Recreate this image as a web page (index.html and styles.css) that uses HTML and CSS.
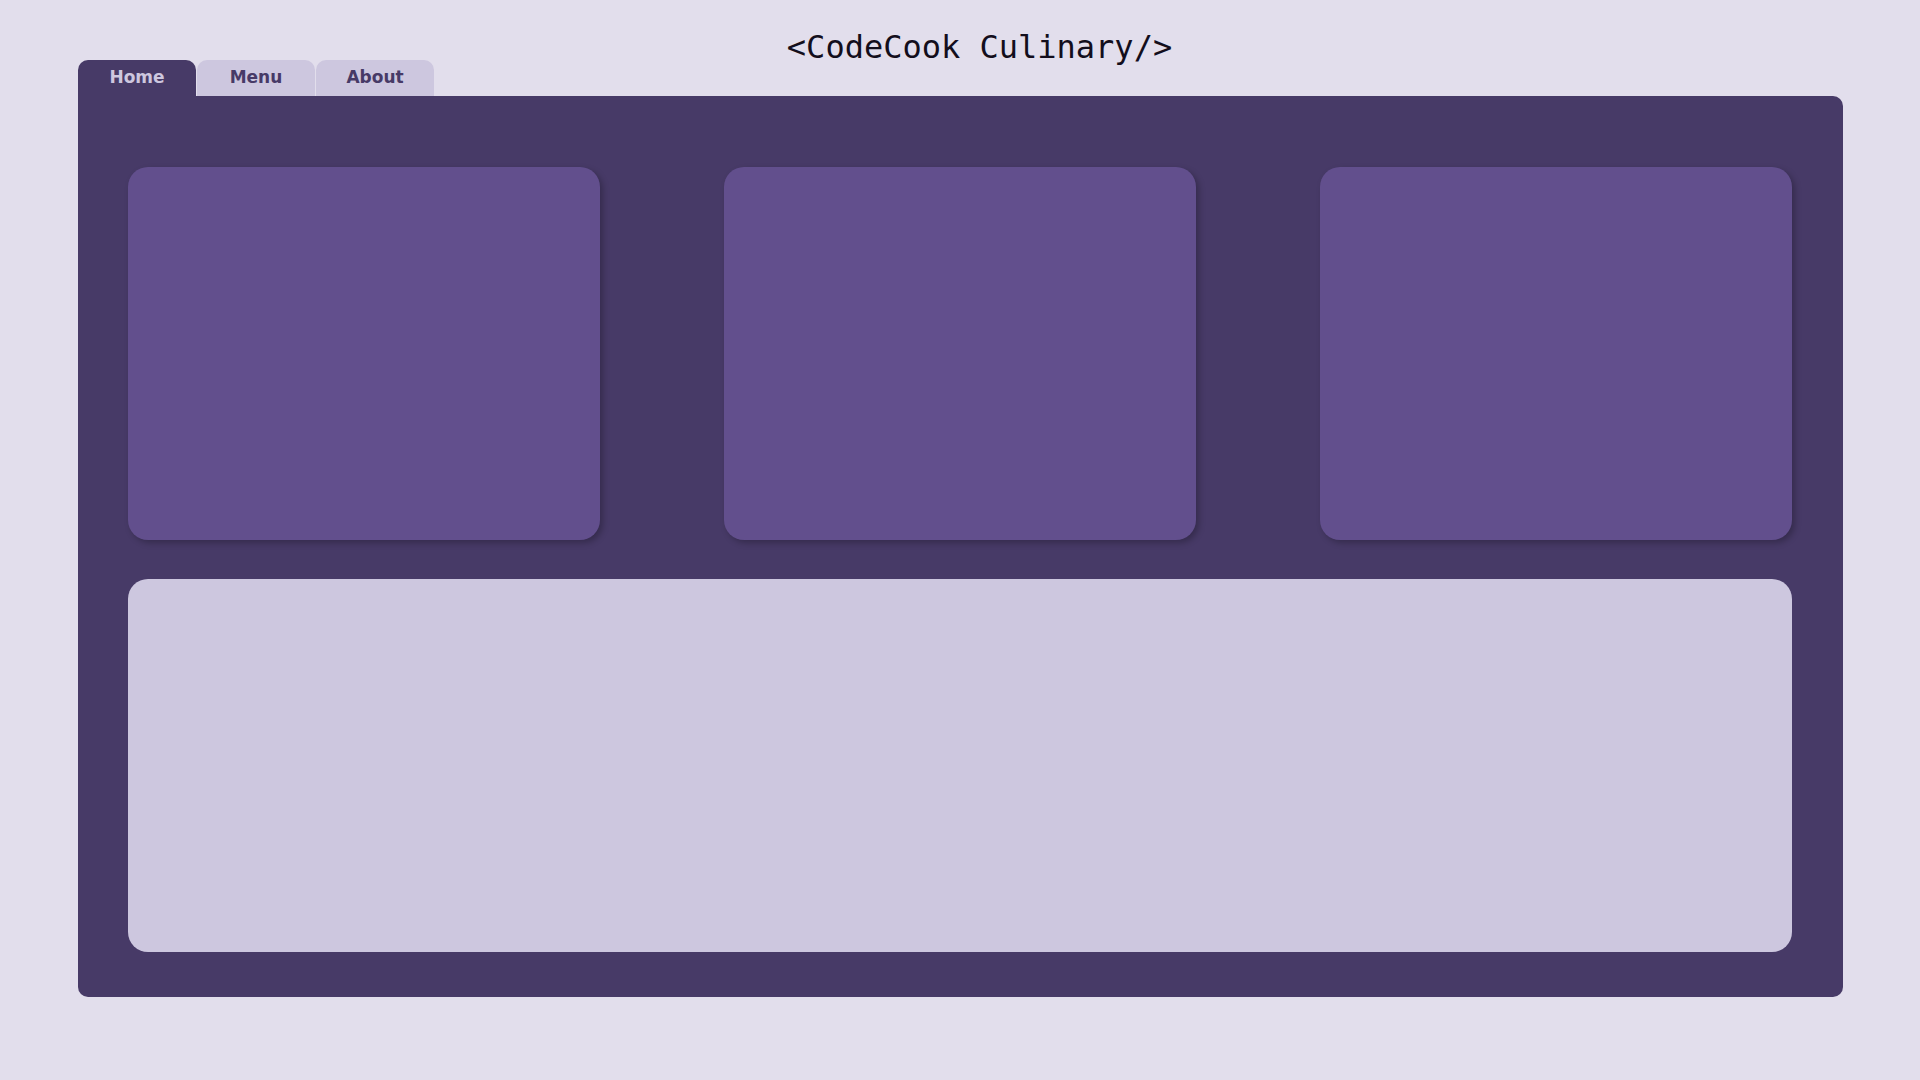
FILE: index.html
```html
<!DOCTYPE html>
<html lang="en">
<head>
<meta charset="utf-8">
<meta name="viewport" content="width=device-width, initial-scale=1">
<title>CodeCook Culinary</title>
<link rel="stylesheet" href="styles.css">
</head>
<body>
<div class="page">
  <header class="header">
    <nav class="tabs" aria-label="Main">
      <a class="tab tab-active" href="#home" aria-current="page">Home</a>
      <a class="tab" href="#menu">Menu</a>
      <a class="tab" href="#about">About</a>
    </nav>
    <h1 class="title">&lt;CodeCook Culinary/&gt;</h1>
  </header>
  <main class="panel" id="home">
    <div class="cards">
      <section class="card"></section>
      <section class="card"></section>
      <section class="card"></section>
    </div>
    <section class="feature"></section>
  </main>
</div>
</body>
</html>
```
FILE: styles.css
```css
* {
  box-sizing: border-box;
}

body {
  margin: 0;
  background: #e2deec;
  color: #130e1c;
}

.page {
  padding: 0 77px 80px 78px;
}

.header {
  display: grid;
  grid-template-columns: 1fr auto 1fr;
  height: 96px;
}

.tabs {
  display: flex;
  align-self: end;
  gap: 1px;
}

.tab {
  width: 118px;
  height: 36px;
  padding-top: 7px;
  border-radius: 10px 10px 0 0;
  background: #cdc7df;
  color: #473a67;
  font: bold 17px/20px "DejaVu Sans", sans-serif;
  text-align: center;
  text-decoration: none;
}

.tab-active {
  background: #473a67;
  color: #cdc7df;
}

.title {
  margin: 0;
  padding: 27px 0 0 38px;
  font: 32px/40px "DejaVu Sans Mono", monospace;
  white-space: nowrap;
}

.panel {
  display: grid;
  gap: 39px;
  padding: 71px 51px 45px 50px;
  border-radius: 0 10px 10px 10px;
  background: #473a67;
}

.cards {
  display: grid;
  grid-template-columns: repeat(3, 1fr);
  gap: 124px;
}

.card,
.feature {
  min-height: 373px;
  border-radius: 20px;
}

.card {
  background: #624f8d;
  box-shadow: 3px 3px 6px rgba(0, 0, 0, 0.25);
}

.feature {
  background: #cdc7df;
}
```
